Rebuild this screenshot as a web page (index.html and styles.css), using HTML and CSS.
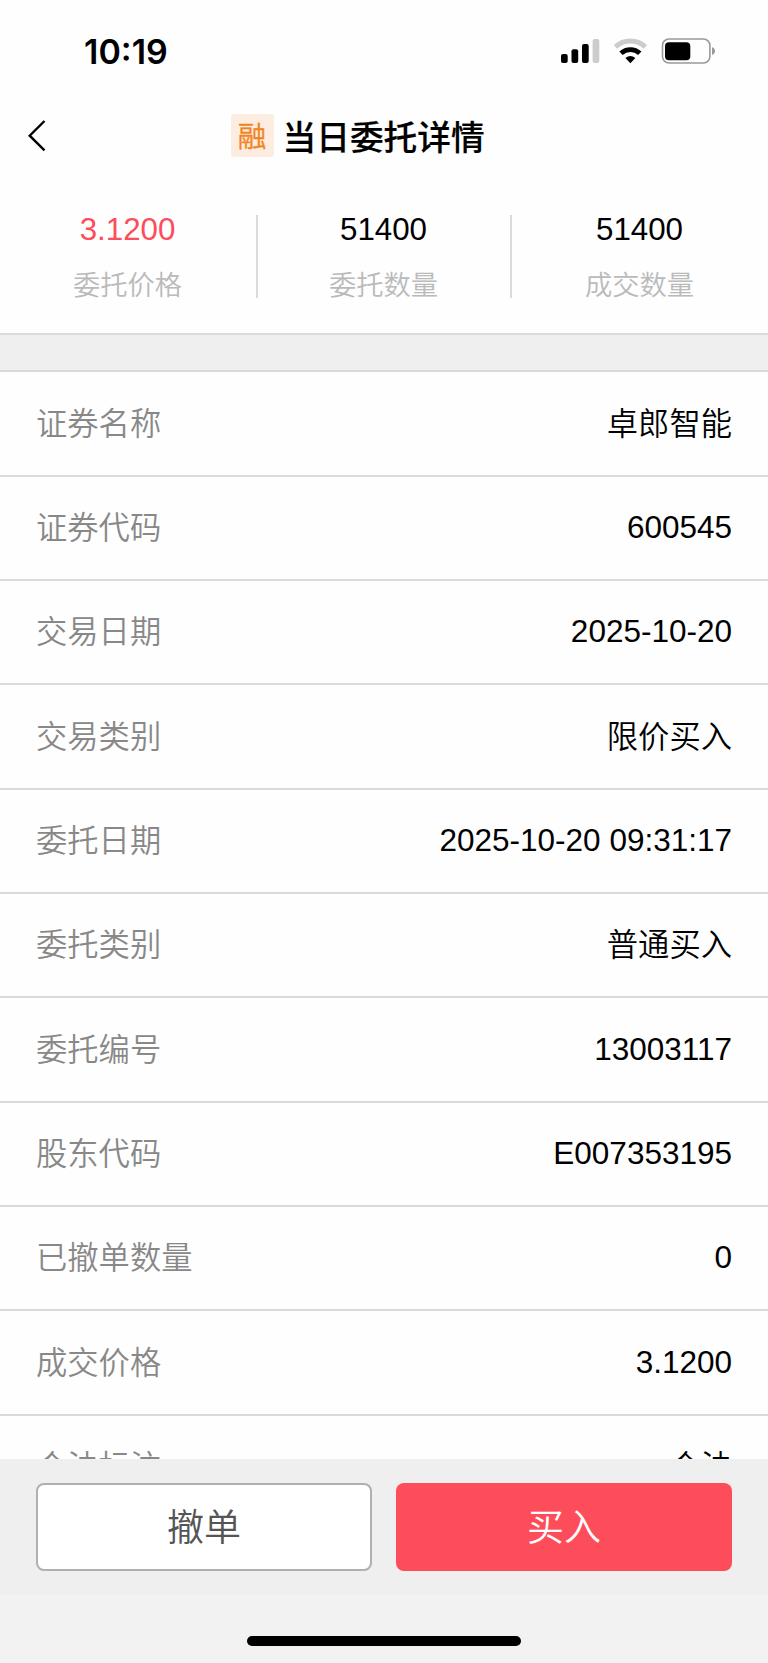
FILE: index.html
```html
<!DOCTYPE html>
<html lang="zh-CN">
<head>
<meta charset="utf-8">
<title>当日委托详情</title>
<link rel="stylesheet" href="styles.css">
</head>
<body>
<div class="screen">
  <div class="status">
    <span class="time">10:19</span>
    <svg class="status-icons" width="156" height="28" viewBox="0 0 156 28">
      <rect x="0" y="16" width="6.7" height="9" rx="2"/>
      <rect x="10.5" y="11.3" width="6.7" height="13.7" rx="2"/>
      <rect x="21" y="6" width="6.7" height="19" rx="2"/>
      <rect x="31.6" y="1" width="6.7" height="24" rx="2" fill="#ccc"/>
      <path d="M54.4 8.9a22.2 22.2 0 0 1 30 0" fill="none" stroke="#ccc" stroke-width="4.9"/>
      <path d="M60 15.3a14 14 0 0 1 18.8 0" fill="none" stroke="#000" stroke-width="4.9"/>
      <path d="M64.4 20q5-4 10 0l-5 5.2z"/>
      <rect x="101.5" y="1" width="47.4" height="24" rx="6.5" fill="none" stroke="#999" stroke-width="1.6"/>
      <rect x="104" y="4.2" width="25.3" height="18" rx="4"/>
      <path d="M151 9.2q3 .9 3 3.9t-3 3.9z" fill="#999"/>
    </svg>
  </div>
  <div class="nav">
    <svg class="back" width="19" height="32" viewBox="0 0 19 32"><path d="M17.5 1L2.7 15.7 17.5 30.4" fill="none" stroke="#000" stroke-width="2.4"/></svg>
    <div class="heading"><span class="badge">融</span><span class="title">当日委托详情</span></div>
  </div>
  <div class="summary">
    <div class="stat"><span class="num red">3.1200</span><span class="cap">委托价格</span></div>
    <div class="stat middle"><span class="num">51400</span><span class="cap">委托数量</span></div>
    <div class="stat"><span class="num">51400</span><span class="cap">成交数量</span></div>
  </div>
  <div class="band"></div>
  <div class="list">
    <div class="row"><span class="label">证券名称</span><span class="word">卓郎智能</span></div>
    <div class="row"><span class="label">证券代码</span><span>600545</span></div>
    <div class="row"><span class="label">交易日期</span><span>2025-10-20</span></div>
    <div class="row"><span class="label">交易类别</span><span class="word">限价买入</span></div>
    <div class="row"><span class="label">委托日期</span><span>2025-10-20 09:31:17</span></div>
    <div class="row"><span class="label">委托类别</span><span class="word">普通买入</span></div>
    <div class="row"><span class="label">委托编号</span><span>13003117</span></div>
    <div class="row"><span class="label">股东代码</span><span>E007353195</span></div>
    <div class="row"><span class="label">已撤单数量</span><span>0</span></div>
    <div class="row"><span class="label">成交价格</span><span>3.1200</span></div>
    <div class="row"><span class="label">合法标注</span><span class="word">合法</span></div>
  </div>
  <div class="actions">
    <div class="btn cancel">撤单</div>
    <div class="btn buy">买入</div>
  </div>
  <div class="home"><div class="home-bar"></div></div>
</div>
</body>
</html>
```
FILE: styles.css
```css
* { box-sizing: border-box; }
body { margin: 0; background: #fff; }
.screen {
  width: 768px;
  height: 1663px;
  display: flex;
  flex-direction: column;
  overflow: hidden;
  background: #fefefe;
  color: #000;
  font-family: "Liberation Sans", "Noto Sans CJK SC DemiLight", "Noto Sans CJK SC", sans-serif;
}
.status {
  flex: none;
  height: 100px;
  padding: 0 51px 0 84px;
  display: flex;
  justify-content: space-between;
}
.time {
  margin-top: 31px;
  line-height: 41px;
  font-family: Inter, sans-serif;
  font-weight: 600;
  font-size: 34px;
}
.status-icons { margin-top: 38px; }
.nav {
  flex: none;
  height: 88px;
  padding: 14px 0 0 27px;
  display: flex;
  align-items: flex-start;
}
.back { margin-top: 6px; }
.heading { display: flex; margin-left: 184.5px; }
.badge {
  width: 43px;
  height: 43px;
  border-radius: 3px;
  background: #fdede0;
  color: #f0851e;
  font-size: 28.5px;
  -webkit-text-stroke: 0.4px #f0851e;
  line-height: 46px;
  text-align: center;
}
.title {
  margin-left: 9px;
  font-family: "Noto Sans CJK SC", sans-serif;
  font-size: 33.7px;
  font-weight: 500;
  -webkit-text-stroke: 0.2px #000;
  line-height: 43px;
  white-space: nowrap;
}
.summary {
  flex: none;
  height: 145px;
  padding-top: 27px;
  display: grid;
  grid-template-columns: repeat(3, 1fr);
}
.stat {
  height: 83px;
  display: flex;
  flex-direction: column;
  align-items: center;
  padding-right: 1px;
}
.middle { border: solid #dadada; border-width: 0 2px; }
.num { font-size: 31.3px; line-height: 30px; }
.cap { margin-top: 24px; font-size: 27.3px; line-height: 33px; color: #bababa; }
.red { color: #fd4d5b; }
.band {
  flex: none;
  height: 39px;
  background: #efefef;
  border-top: 2px solid #dadada;
  border-bottom: 2px solid #dadada;
}
.list { height: 1087px; flex: none; overflow: hidden; padding-top: 0.4px; }
.row {
  height: 104.33px;
  display: flex;
  justify-content: space-between;
  align-items: center;
  padding: 0 36px 2px;
  border-bottom: 2px solid #dadada;
  font-size: 31.5px;
  line-height: 40px;
}
.label { padding-top: 4px; color: #888; font-size: 31.3px; }
.word { padding-top: 4px; font-size: 31.3px; }
.actions {
  flex: none;
  height: 136px;
  padding: 24px 36px;
  display: grid;
  grid-template-columns: 1fr 1fr;
  gap: 24px;
  background: #efefef;
}
.btn { height: 88px; border-radius: 8px; text-align: center; font-size: 37px; line-height: 91px; }
.cancel { background: #fff; border: 2px solid #b0b0b0; color: #555; line-height: 87px; }
.buy { background: #fd4d5b; color: #fff; }
.home {
  flex: 1;
  display: flex;
  justify-content: center;
  align-items: flex-start;
  padding-top: 41px;
  background: #f2f2f2;
}
.home-bar { width: 274px; height: 10px; border-radius: 5px; background: #000; }
```
